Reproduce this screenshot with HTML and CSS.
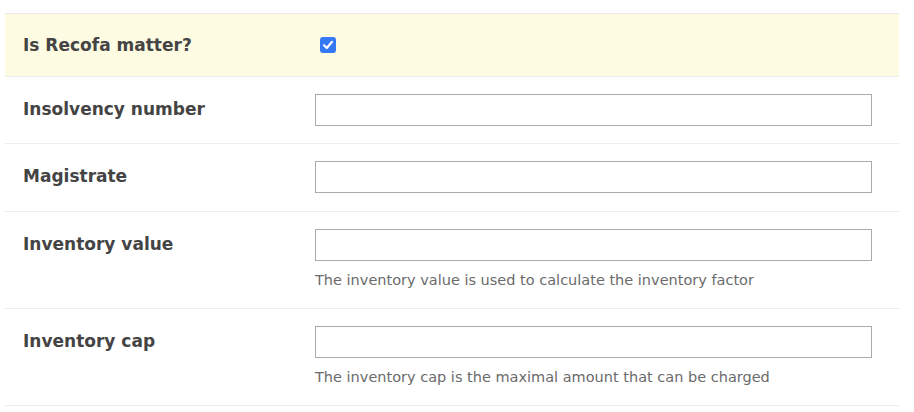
FILE: index.html
```html
<!DOCTYPE html>
<html>
<head>
<meta charset="utf-8">
<link rel="stylesheet" href="styles.css">
</head>
<body>
<div class="form">
  <div class="row row-check highlight">
    <div class="label">Is Recofa matter?</div>
    <div class="control"><input type="checkbox" class="check" checked></div>
  </div>
  <div class="row">
    <div class="label">Insolvency number</div>
    <div class="control"><input type="text" class="text"></div>
  </div>
  <div class="row row-mid">
    <div class="label">Magistrate</div>
    <div class="control"><input type="text" class="text"></div>
  </div>
  <div class="row">
    <div class="label">Inventory value</div>
    <div class="control"><input type="text" class="text"><div class="help">The inventory value is used to calculate the inventory factor</div></div>
  </div>
  <div class="row">
    <div class="label">Inventory cap</div>
    <div class="control"><input type="text" class="text"><div class="help">The inventory cap is the maximal amount that can be charged</div></div>
  </div>
</div>
</body>
</html>
```
FILE: styles.css
```css
html, body { margin: 0; padding: 0; background: #fff; }
body { font-family: "DejaVu Sans", Verdana, sans-serif; color: #444; }
.form {
  margin: 13px 15px 0 5px;
  border-top: 1px solid #ececec;
}
.row {
  display: grid;
  grid-template-columns: 292px 557px;
  padding: 17px 0 17px 18px;
  border-bottom: 1px solid #ececec;
  align-items: start;
}
.row-mid { padding-bottom: 18px; }
.highlight { background: #fefbe3; }
.row-check { align-items: center; padding-top: 21px; padding-bottom: 21px; }
.label {
  font-weight: bold;
  font-size: 17px;
  line-height: 20px;
  padding-top: 5px;
  color: #444;
}
.row-check .label { padding-top: 0; }
.control { display: flex; flex-direction: column; }
.text {
  box-sizing: border-box;
  width: 557px;
  height: 32px;
  margin: 0;
  border: 1px solid #aaa;
  background: #fff;
  font: inherit;
  padding: 4px 8px;
}
.help {
  margin-top: 9px;
  font-size: 14.5px;
  line-height: 20px;
  color: #6b6b6b;
  padding-bottom: 1px;
}
.check {
  appearance: none;
  -webkit-appearance: none;
  margin: 0 0 0 5px;
  width: 16px;
  height: 16px;
  border-radius: 3px;
  background: #3478f6 url("data:image/svg+xml;utf8,<svg xmlns='http://www.w3.org/2000/svg' viewBox='0 0 16 16'><path d='M4 8.3 L6.8 11 L12 4.8' fill='none' stroke='white' stroke-width='2.2' stroke-linecap='round' stroke-linejoin='round'/></svg>") center/16px 16px no-repeat;
}
```
